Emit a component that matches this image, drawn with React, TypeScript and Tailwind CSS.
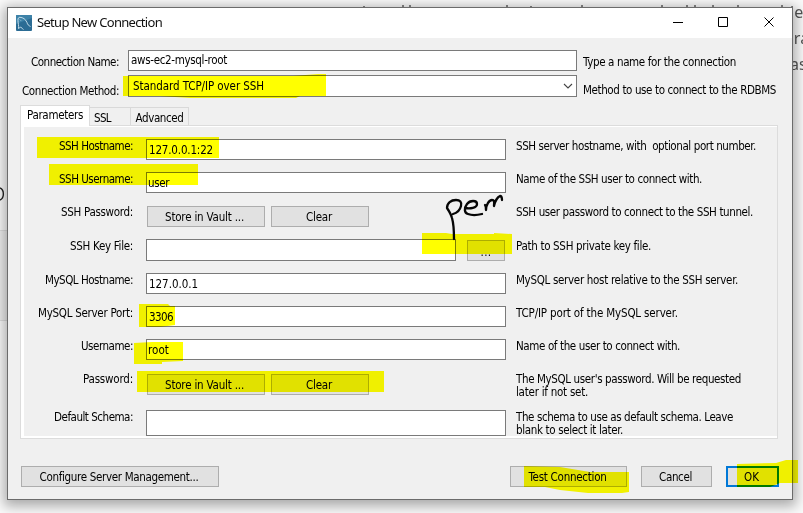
import { useLayoutEffect, useRef, useState } from 'react';
import type { ReactNode } from 'react';

/* A single line of text whose tracking is adjusted so that it spans `w` pixels. */
function Line({ w, children, className = '' }: { w: number; children: string; className?: string }) {
  const ref = useRef<HTMLSpanElement>(null);
  const [spacing, setSpacing] = useState(0);
  useLayoutEffect(() => {
    if (ref.current) {
      const natural = ref.current.getBoundingClientRect().width;
      setSpacing((w - natural) / children.length);
    }
  }, [w, children]);
  return (
    <span className={`block shrink-0 whitespace-pre ${className}`}>
      <span ref={ref} style={{ letterSpacing: `${spacing}px` }}>
        {children}
      </span>
    </span>
  );
}

function Button({ className, children }: { className: string; children: ReactNode }) {
  return (
    <button
      className={`flex shrink-0 items-center justify-center border border-[#adadad] bg-[#e1e1e1] pt-[2px] ${className}`}
    >
      {children}
    </button>
  );
}

function Field({ className, children }: { className: string; children?: ReactNode }) {
  return (
    <div className={`flex shrink-0 items-center border border-[#7a7a7a] bg-white ${className}`}>{children}</div>
  );
}

function Row({
  height,
  label,
  labelWidth,
  help,
  children,
}: {
  height: string;
  label: string;
  labelWidth: number;
  help: [string, number][];
  children: ReactNode;
}) {
  return (
    <div className={`flex items-start ${height}`}>
      <div className="flex w-[109px] shrink-0 justify-end pt-[1px]">
        <Line w={labelWidth}>{label}</Line>
      </div>
      <div className="ml-[13px] flex w-[360px] shrink-0">{children}</div>
      <div className="ml-[10px] pt-[1px]">
        {help.map(([text, w]) => (
          <Line key={text} w={w}>
            {text}
          </Line>
        ))}
      </div>
    </div>
  );
}

function VaultButtons({ className }: { className: string }) {
  return (
    <div className={`ml-[1px] flex gap-[6px] ${className}`}>
      <Button className="h-[21px] w-[118px] pr-[3px]">
        <Line w={79}>Store in Vault ...</Line>
      </Button>
      <Button className="h-[21px] w-[98px] pr-[2px]">
        <Line w={26}>Clear</Line>
      </Button>
    </div>
  );
}

function Backdrop() {
  return (
    <div className="absolute inset-0 overflow-hidden bg-[#fafafa] font-['Noto_Sans'] text-[16px] text-[#555]">
      <div className="absolute left-0 top-[230px] h-[91px] w-[20px] border-y border-[#dedede] bg-[#eeeeee]" />
      <svg className="absolute left-0 top-0" width="803" height="220" fill="none" stroke="#555" strokeWidth="1.4">
        <path d="M364 6v3M403 5v4M410 5v4M507 5v4M531 6v3M582 5v4M662 5v4M687 5v3M695 5v4M713 5v4M738 5v4M782 5v4" />
        <path d="M0 188C4.500 190 4.500 198 0 200" stroke="#222" />
      </svg>
      <span className="absolute left-[790px] top-0 whitespace-nowrap leading-[24px]">le</span>
      <span className="absolute left-[784px] top-[26px] whitespace-nowrap leading-[24px]">gra</span>
      <span className="absolute left-[790px] top-[52px] whitespace-nowrap leading-[24px]">as</span>
    </div>
  );
}

function Annotations() {
  return (
    <>
      <svg className="pointer-events-none absolute inset-0 mix-blend-multiply" width="803" height="513" fill="#ffff00">
        <path d="M123 76H293L318 74H326V96H300L296 98H190L160 96H123Z" />
        <path d="M37 137H219V158H37Z" />
        <path d="M49 164H198V185H49Z" />
        <path d="M422 233H446L452 234H494V233L512 234V254H422Z" />
        <path d="M139 304H168L170 306H175V325L160 327H139Z" />
        <path d="M134 343L152 342H183V361L162 362V364H134Z" />
        <path d="M137 371H384V392H137Z" />
        <path d="M524 466L560 467 590 472H629V492L622 493H588L560 490 545 487H524Z" />
        <path d="M737 464L776 463 786 460H798V483H780L770 487H737Z" />
      </svg>
      <svg
        className="pointer-events-none absolute inset-0"
        width="803"
        height="513"
        fill="none"
        stroke="#050505"
        strokeWidth="2.3"
        strokeLinecap="round"
        strokeLinejoin="round"
      >
        <path d="M454 239C454 231 454 225 452 218 451 214 449 211 447 208 447 203 451 200 456 200 460 200 462 202 461 206 460 210 457 213 453 214" />
        <path d="M465 208C470 209 477 208 477 204 477 200 470 200 467 204 464 208 464 213 468 214 473 216 478 215 482 214" />
        <path d="M485 205C486 206 486 208 486 210 486 205 489 200 492 200 495 200 494 203 494 206 495 201 498 197 500 196 502 196 502 198 502 200" />
      </svg>
    </>
  );
}

export default function App() {
  return (
    <div className="relative h-[513px] w-[803px] overflow-hidden font-['DejaVu_Sans_Condensed','DejaVu_Sans',sans-serif] text-[11.5px] leading-[13px] text-black">
      <Backdrop />
      <div className="relative p-[7px]">
        <div className="flex h-[493px] w-[786px] flex-col border border-[#6b6b6b] bg-[#f0f0f0] shadow-[0_3px_12px_3px_rgba(0,0,0,0.33)]">
          <header className="flex h-[30px] shrink-0 items-center bg-white pl-[8px]">
            <svg width="16" height="16" viewBox="0 0 16 16">
              <rect width="16" height="16" rx="1" fill="#2b6c94" />
              <path d="M0 9 16 3V1Q16 0 15 0H1Q0 0 0 1Z" fill="#3d82a8" />
              <path
                d="M2.5 13.5C3 11 2 8 2 5.500 1.800 3.500 2.500 2 4 2.300 7 2.500 9.500 4 11 7.500 11.500 9.500 12.500 10.500 14.500 11.500M2.500 13.500C3.500 13 4.200 12 5 12.300 6 13 6.500 14 7.500 14.500M4 4.700 4.800 5.500"
                fill="none"
                stroke="#d5e9f2"
                strokeWidth="0.9"
              />
            </svg>
            <Line w={125} className="ml-[5px] pb-[2px] font-['Noto_Sans'] text-[13px] leading-[18px] text-[#111]">
              Setup New Connection
            </Line>
            <svg className="mb-[2px] ml-auto mr-[17px]" width="102" height="12" fill="none" stroke="#000" strokeWidth="1">
              <path d="M0 6.500H10M45.500 1.500H54.500V10.500H45.500ZM91.500 1.500 100.500 10.500M100.500 1.500 91.500 10.500" />
            </svg>
          </header>

          <div className="mt-[12px] flex h-[25px] shrink-0 items-start">
            <div className="flex w-[111px] justify-end pt-[6px]">
              <Line w={88}>Connection Name:</Line>
            </div>
            <Field className="ml-[9px] h-[21px] w-[449px] pl-[2px]">
              <Line w={96}>aws-ec2-mysql-root</Line>
            </Field>
            <Line w={153} className="ml-[6px] pt-[6px]">
              Type a name for the connection
            </Line>
          </div>
          <div className="flex h-[30px] shrink-0 items-start">
            <div className="flex w-[111px] justify-end pt-[10px]">
              <Line w={97}>Connection Method:</Line>
            </div>
            <Field className="ml-[9px] h-[22px] w-[449px] justify-between pl-[4px] pr-[3px]">
              <Line w={131} className="pt-[1px]">
                Standard TCP/IP over SSH
              </Line>
              <svg width="10" height="6" fill="none" stroke="#444" strokeWidth="1.1">
                <path d="M1 1 5 5 9 1" />
              </svg>
            </Field>
            <Line w={193} className="ml-[6px] pt-[9px]">
              Method to use to connect to the RDBMS
            </Line>
          </div>

          <nav className="relative z-10 ml-[12px] flex h-[20px] shrink-0 items-end">
            <div className="mb-[-1px] flex h-[21px] w-[70px] justify-center border border-b-0 border-[#dcdcdc] bg-white pt-[3px]">
              <Line w={56}>Parameters</Line>
            </div>
            <div className="h-[18px] w-[40px] border-t border-[#d9d9d9] pl-[4px] pt-[4px]">
              <Line w={17}>SSL</Line>
            </div>
            <div className="flex h-[18px] w-[59px] justify-center border border-b-0 border-[#d9d9d9] pt-[4px]">
              <Line w={48}>Advanced</Line>
            </div>
          </nav>
          <main className="ml-[12px] h-[314px] w-[758px] shrink-0 border border-[#dcdcdc] bg-white pb-[2px] pl-[3px] pt-[1px]">
            <div className="h-full bg-[#f0f0f0] pt-[12px]">
              <Row height="h-[33px]" label="SSH Hostname:" labelWidth={74} help={[['SSH server hostname, with  optional port number.', 240]]}>
                <Field className="h-[21px] w-[360px] pl-[2px] pt-[1px]">
                  <Line w={64}>127.0.0.1:22</Line>
                </Field>
              </Row>
              <Row height="h-[33px]" label="SSH Username:" labelWidth={74} help={[['Name of the SSH user to connect with.', 186]]}>
                <Field className="h-[21px] w-[360px] pl-[1px] pt-[1px]">
                  <Line w={21}>user</Line>
                </Field>
              </Row>
              <Row height="h-[34px]" label="SSH Password:" labelWidth={72} help={[['SSH user password to connect to the SSH tunnel.', 237]]}>
                <VaultButtons className="pt-[1px]" />
              </Row>
              <Row height="h-[34px]" label="SSH Key File:" labelWidth={63} help={[['Path to SSH private key file.', 135]]}>
                <Field className="h-[22px] w-[310px]" />
                <Button className="ml-[11px] mt-[1px] h-[21px] w-[38px]">
                  <Line w={11} className="pt-[1px]">
                    ...
                  </Line>
                </Button>
              </Row>
              <Row height="h-[33px]" label="MySQL Hostname:" labelWidth={88} help={[['MySQL server host relative to the SSH server.', 222]]}>
                <Field className="h-[21px] w-[360px] pl-[2px] pt-[1px]">
                  <Line w={49}>127.0.0.1</Line>
                </Field>
              </Row>
              <Row height="h-[33px]" label="MySQL Server Port:" labelWidth={95} help={[['TCP/IP port of the MySQL server.', 162]]}>
                <Field className="h-[21px] w-[360px] pl-[2px] pt-[1px]">
                  <Line w={24}>3306</Line>
                </Field>
              </Row>
              <Row height="h-[33px]" label="Username:" labelWidth={52} help={[['Name of the user to connect with.', 164]]}>
                <Field className="h-[21px] w-[360px] pl-[1px] pt-[1px]">
                  <Line w={21}>root</Line>
                </Field>
              </Row>
              <Row
                height="h-[38px]"
                label="Password:"
                labelWidth={50}
                help={[
                  ["The MySQL user's password. Will be requested", 225],
                  ['later if not set.', 72],
                ]}
              >
                <VaultButtons className="pt-[2px]" />
              </Row>
              <Row
                height="h-[27px]"
                label="Default Schema:"
                labelWidth={79}
                help={[
                  ['The schema to use as default schema. Leave', 217],
                  ['blank to select it later.', 107],
                ]}
              >
                <Field className="h-[26px] w-[360px]" />
              </Row>
            </div>
          </main>

          <footer className="ml-[13px] mt-[27px] flex">
            <Button className="h-[21px] w-[198px] pr-[2px]">
              <Line w={159}>Configure Server Management...</Line>
            </Button>
            <Button className="ml-[291px] h-[21px] w-[117px] pr-[2px]">
              <Line w={78}>Test Connection</Line>
            </Button>
            <Button className="ml-[14px] h-[21px] w-[71px] pr-[2px]">
              <Line w={33}>Cancel</Line>
            </Button>
            <button className="ml-[14px] flex h-[21px] w-[53px] items-center justify-center border-2 border-[#0078d7] bg-[#e1e1e1] pr-[2px] pt-[2px]">
              <Line w={15}>OK</Line>
            </button>
          </footer>
        </div>
      </div>
      <Annotations />
    </div>
  );
}
